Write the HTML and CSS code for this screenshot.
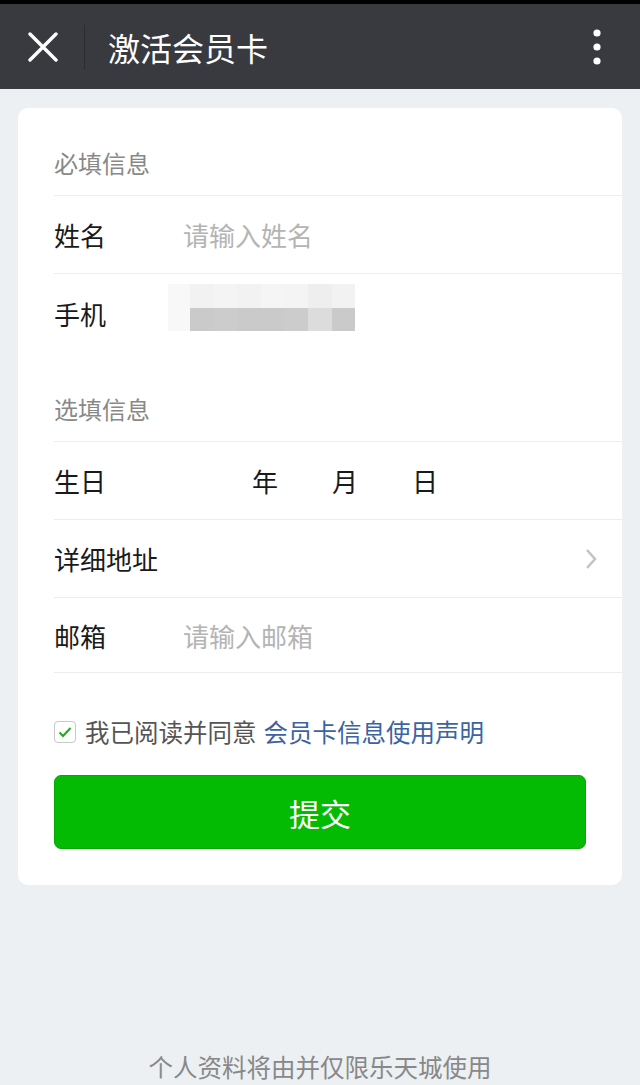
FILE: index.html
```html
<!DOCTYPE html>
<html lang="zh-CN">
<head>
    <meta charset="UTF-8">
    <meta name="viewport" content="width=device-width, initial-scale=1.0">
    <title>激活会员卡</title>
    <link rel="stylesheet" href="styles.css">
</head>
<body>
    <div class="page">
        <header class="topbar">
            <div class="close">
                <svg width="30" height="30" viewBox="0 0 30 30">
                    <path d="M2 2 L28 28 M28 2 L2 28" stroke="#fff" stroke-width="3.4" stroke-linecap="round"/>
                </svg>
            </div>
            <div class="divider"></div>
            <div class="title">激活会员卡</div>
            <div class="more">
                <svg width="10" height="36" viewBox="0 0 10 36">
                    <circle cx="5" cy="4" r="3.6" fill="#fff"/>
                    <circle cx="5" cy="18" r="3.6" fill="#fff"/>
                    <circle cx="5" cy="32" r="3.6" fill="#fff"/>
                </svg>
            </div>
        </header>

        <div class="card">
            <!-- 必填 -->
            <div class="section-head"><span>必填信息</span></div>
            <div class="row">
                <div class="label">姓名</div>
                <div class="value placeholder">请输入姓名</div>
            </div>
            <div class="row row-plain">
                <div class="label">手机</div>
                <div class="blur">
                    <span class="px-l"></span><span class="px-t"></span><span class="px-t2"></span><span class="px-t"></span><span class="px-t3"></span><span class="px-t2"></span><span class="px-t4"></span><span class="px-t"></span>
                    <span class="px-l"></span><span class="px-d"></span><span class="px-d2"></span><span class="px-d"></span><span class="px-d"></span><span class="px-d2"></span><span class="px-m"></span><span class="px-d"></span>
                </div>
            </div>

            <!-- 选填 -->
            <div class="section-head second"><span>选填信息</span></div>
            <div class="row">
                <div class="label">生日</div>
                <div class="value date">
                    <span class="date-part first">年</span>
                    <span class="date-part">月</span>
                    <span class="date-part">日</span>
                </div>
            </div>
            <div class="row">
                <div class="label">详细地址</div>
                <div class="value"></div>
                <svg class="arrow" width="14" height="22" viewBox="0 0 14 22">
                    <path d="M3 2 L11 11 L3 20" fill="none" stroke="#c4c4c8" stroke-width="2.6"/>
                </svg>
            </div>
            <div class="row row-last">
                <div class="label">邮箱</div>
                <div class="value placeholder">请输入邮箱</div>
            </div>

            <div class="agree">
                <span class="checkbox">
                    <svg width="14" height="12" viewBox="0 0 14 12">
                        <path d="M1.5 6.5 L5 10 L12.5 2" fill="none" stroke="#1aad19" stroke-width="2"/>
                    </svg>
                </span>
                <span>我已阅读并同意</span>
                <a class="link" href="#">会员卡信息使用声明</a>
            </div>

            <button class="submit">提交</button>
        </div>

        <div class="footer">个人资料将由并仅限乐天城使用</div>
    </div>
</body>
</html>
```

FILE: styles.css
```css
body {
    margin: 0;
    padding: 0;
    background-color: #edf0f3;
    font-family: "Noto Sans CJK SC", "Noto Sans", sans-serif;
    color: #1a1a1a;
}
.page {
    display: flex;
    flex-direction: column;
    min-height: 100vh;
}
.topbar {
    display: flex;
    align-items: center;
    height: 85px;
    border-top: 4px solid #000;
    background-color: #393a3f;
    color: #fff;
}
.close {
    display: flex;
    width: 30px;
    margin-left: 28px;
}
.divider {
    width: 1px;
    height: 44px;
    margin-left: 26px;
    background-color: #2a2b2f;
}
.title {
    flex: 1;
    margin-left: 23px;
    font-size: 32px;
    line-height: 40px;
}
.more {
    display: flex;
    margin-right: 38px;
}
.card {
    margin: 19px 18px 0;
    padding: 0 0 36px 36px;
    background-color: #fff;
    border-radius: 10px;
}
.section-head {
    display: flex;
    align-items: flex-end;
    height: 88px;
    padding-bottom: 16px;
    box-sizing: border-box;
    border-bottom: 1px solid #ededed;
    font-size: 24px;
    line-height: 32px;
    color: #888;
}
.section-head.second {
    height: 90px;
}
.row {
    display: flex;
    align-items: center;
    height: 78px;
    box-sizing: border-box;
    border-bottom: 1px solid #ededed;
    font-size: 26px;
}
.row-plain {
    border-bottom: none;
}
.row-last {
    height: 75px;
}
.label {
    width: 129px;
    flex-shrink: 0;
}
.value {
    flex: 1;
}
.placeholder {
    color: #b4b4b4;
}
.date {
    display: flex;
}
.date-part {
    margin-left: 54px;
}
.date-part.first {
    margin-left: 69px;
}
.arrow {
    margin-right: 24px;
}
.blur {
    display: grid;
    grid-template-columns: 22px repeat(7, 23.6px);
    grid-template-rows: 24px 23px;
    align-self: flex-start;
    margin-left: -15px;
    margin-top: 10px;
}
.px-l { background-color: #f8f8f8; }
.px-t { background-color: #f2f2f2; }
.px-t2 { background-color: #f4f4f4; }
.px-t3 { background-color: #f5f5f5; }
.px-t4 { background-color: #eeeeee; }
.px-d { background-color: #cacaca; }
.px-d2 { background-color: #cccccc; }
.px-m { background-color: #dcdcdc; }
.agree {
    display: flex;
    align-items: center;
    margin-top: 43px;
    font-size: 24.5px;
    line-height: 32px;
    color: #555;
}
.checkbox {
    display: flex;
    justify-content: center;
    align-items: center;
    width: 20px;
    height: 20px;
    margin-right: 9px;
    border: 1px solid #c8c8c8;
    border-radius: 4px;
}
.link {
    margin-left: 7px;
    color: #3b64a3;
    text-decoration: none;
}
.submit {
    display: block;
    width: 532px;
    height: 74px;
    margin-top: 27px;
    border: 1px solid #06a706;
    border-radius: 7px;
    background-color: #04bb04;
    color: #fff;
    font-family: inherit;
    font-size: 31px;
    cursor: pointer;
}
.footer {
    margin-top: auto;
    padding-bottom: 2px;
    text-align: center;
    font-size: 24.5px;
    line-height: 32px;
    color: #888;
}
```
